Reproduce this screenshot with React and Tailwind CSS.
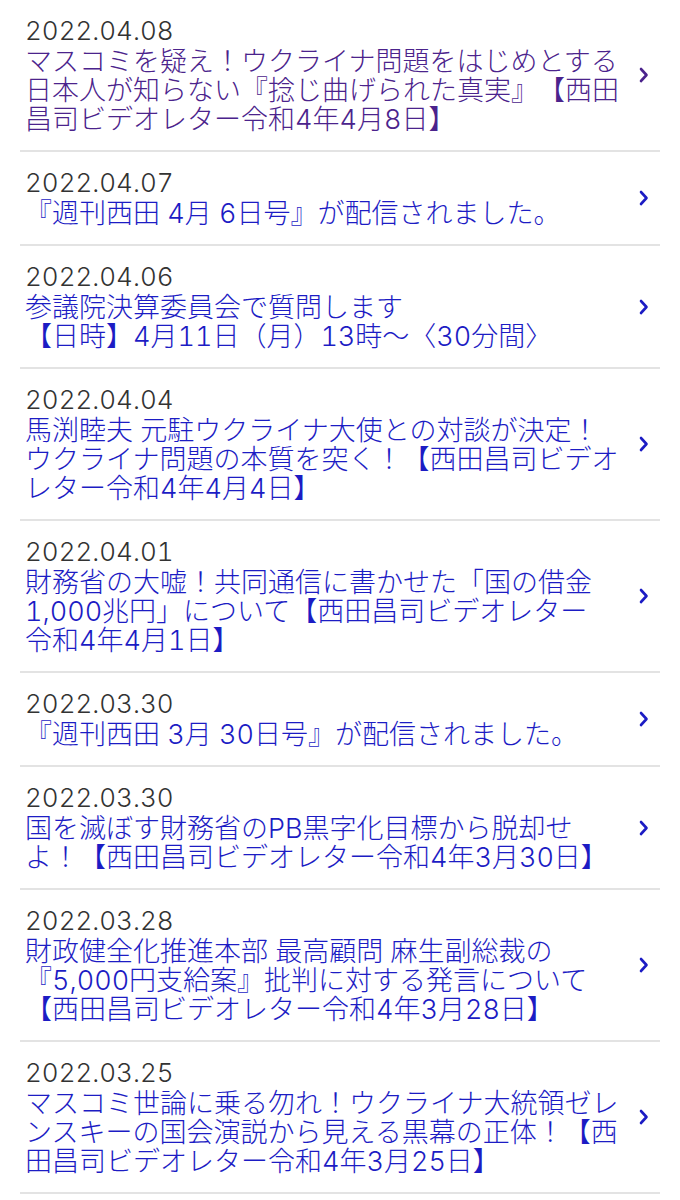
import React from "react";

const items = [
  {
    date: "2022.04.08",
    visited: true,
    lines: [
      "マスコミを疑え！ウクライナ問題をはじめとする",
      "日本人が知らない『捻じ曲げられた真実』【西田",
      "昌司ビデオレター令和4年4月8日】",
    ],
  },
  { date: "2022.04.07", lines: ["『週刊西田 4月 6日号』が配信されました。"] },
  {
    date: "2022.04.06",
    lines: ["参議院決算委員会で質問します", "【日時】4月11日（月）13時～〈30分間〉"],
  },
  {
    date: "2022.04.04",
    lines: [
      "馬渕睦夫 元駐ウクライナ大使との対談が決定！",
      "ウクライナ問題の本質を突く！【西田昌司ビデオ",
      "レター令和4年4月4日】",
    ],
  },
  {
    date: "2022.04.01",
    lines: [
      "財務省の大嘘！共同通信に書かせた「国の借金",
      "1,000兆円」について【西田昌司ビデオレター",
      "令和4年4月1日】",
    ],
  },
  { date: "2022.03.30", lines: ["『週刊西田 3月 30日号』が配信されました。"] },
  {
    date: "2022.03.30",
    lines: [
      "国を滅ぼす財務省のPB黒字化目標から脱却せ",
      "よ！【西田昌司ビデオレター令和4年3月30日】",
    ],
  },
  {
    date: "2022.03.28",
    lines: [
      "財政健全化推進本部 最高顧問 麻生副総裁の",
      "『5,000円支給案』批判に対する発言について",
      "【西田昌司ビデオレター令和4年3月28日】",
    ],
  },
  {
    date: "2022.03.25",
    lines: [
      "マスコミ世論に乗る勿れ！ウクライナ大統領ゼレ",
      "ンスキーの国会演説から見える黒幕の正体！【西",
      "田昌司ビデオレター令和4年3月25日】",
    ],
  },
];

function Chevron({ color }) {
  return (
    <svg width="10" height="16" viewBox="0 0 10 16" fill="none">
      <polyline
        points="2,2 7.5,8 2,14"
        stroke={color}
        strokeWidth="2.6"
        strokeLinecap="round"
        strokeLinejoin="round"
      />
    </svg>
  );
}

export default function App() {
  return (
    <div
      className="w-[680px] min-h-[1200px] bg-white tabular-nums [text-spacing-trim:space-all]"
      style={{ fontFamily: 'Inter, "Noto Sans CJK JP", sans-serif' }}
    >
      <ul className="mx-5 flex flex-col">
        {items.map((it, i) => {
          const color = it.visited ? "#4b238c" : "#1c1cc4";
          return (
            <li
              key={i}
              className="flex items-center border-b-2 border-[#e3e3e3] pt-4 pb-4"
            >
              <div className="flex-1 min-w-0 pl-[5px]">
                <div className="text-[26px] leading-[30px] font-light text-[#333333]">
                  {it.date}
                </div>
                <div
                  className={
                    "mt-px text-[27px] leading-[29px] font-light " +
                    (it.visited ? "text-[#4b238c]" : "text-[#1c1cc4]")
                  }
                >
                  {it.lines.map((l, j) => (
                    <div key={j} className="whitespace-nowrap">
                      {l}
                    </div>
                  ))}
                </div>
              </div>
              <div className="flex w-[10px] mr-[11px] ml-4">
                <Chevron color={color} />
              </div>
            </li>
          );
        })}
      </ul>
    </div>
  );
}
